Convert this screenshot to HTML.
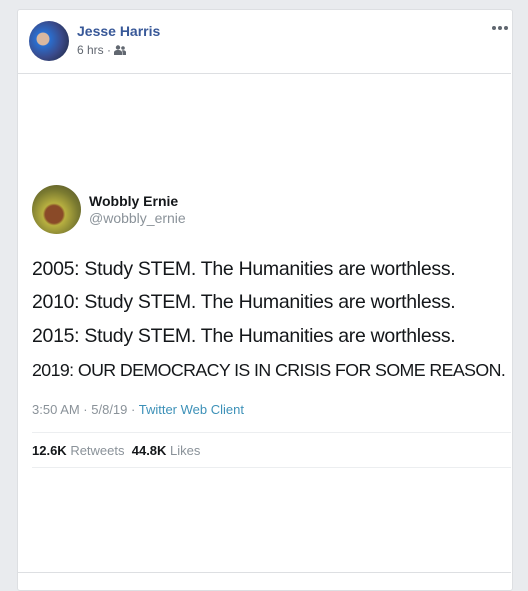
<html><head><style>
body{margin:0;width:528px;height:579px;background:#e9ebee;font-family:"Liberation Sans",sans-serif;position:relative;overflow:hidden}
.card{position:absolute;left:17px;top:9px;width:494px;height:580px;background:#fff;border:1px solid #dddfe2;border-radius:3px}
.abs{position:absolute;white-space:nowrap}
.t{font-size:19.5px;color:#14171a;letter-spacing:-0.3px;left:32px}
</style></head><body>
<div class="card"></div>
<div class="abs" style="left:29px;top:21px;width:40px;height:40px;border-radius:50%;background:radial-gradient(circle at 35% 45%,#d9b8a0 0 18%,#2a6fd0 20%,#3a4a8a 55%,#1a2233 100%)"></div>
<div class="abs" style="left:77px;top:23px;font-size:14px;font-weight:bold;color:#385898">Jesse Harris</div>
<div class="abs" style="left:77px;top:43px;font-size:12px;color:#616770">6 hrs · <svg width="12" height="10" viewBox="0 0 12 10" style="vertical-align:-1px"><circle cx="4" cy="2.5" r="2.2" fill="#616770"/><circle cx="9" cy="3" r="1.8" fill="#616770"/><path d="M0 10v-2.5c0-1.5 1.5-2.5 4-2.5s4 1 4 2.5V10z" fill="#616770"/><path d="M8.5 10V7.5c0-1 -0.3-1.5-0.8-2 0.4-.1.8-.2 1.3-.2 2 0 3 .9 3 2V10z" fill="#616770"/></svg></div>
<svg class="abs" style="left:491px;top:25px" width="18" height="6"><circle cx="3" cy="3" r="2" fill="#606770"/><circle cx="9" cy="3" r="2" fill="#606770"/><circle cx="15" cy="3" r="2" fill="#606770"/></svg>
<div class="abs" style="left:18px;top:73px;width:493px;height:1px;background:#dddfe2"></div>
<div class="abs" style="left:32px;top:185px;width:49px;height:49px;border-radius:50%;background:radial-gradient(circle at 45% 60%,#8a4a28 0 22%,#b8b040 28%,#7a7a30 60%,#4a4a28 100%)"></div>
<div class="abs" style="left:89px;top:193px;font-size:14px;font-weight:bold;color:#14171a">Wobbly Ernie</div>
<div class="abs" style="left:89px;top:210px;font-size:14px;color:#8a9299">@wobbly_ernie</div>
<div class="abs t" style="top:258px">2005: Study STEM. The Humanities are worthless.</div>
<div class="abs t" style="top:291px">2010: Study STEM. The Humanities are worthless.</div>
<div class="abs t" style="top:325px">2015: Study STEM. The Humanities are worthless.</div>
<div class="abs t" style="top:360px;font-size:17.8px;letter-spacing:-0.6px">2019: OUR DEMOCRACY IS IN CRISIS FOR SOME REASON.</div>
<div class="abs" style="left:32px;top:402px;font-size:13px;color:#8a9299">3:50 AM · 5/8/19 · <span style="color:#3d91b8">Twitter Web Client</span></div>
<div class="abs" style="left:32px;top:432px;width:479px;height:1px;background:#eceef0"></div>
<div class="abs" style="left:32px;top:443px;font-size:13px;color:#8a9299"><b style="color:#14171a">12.6K</b> Retweets &nbsp;<b style="color:#14171a">44.8K</b> Likes</div>
<div class="abs" style="left:32px;top:467px;width:479px;height:1px;background:#eceef0"></div>
<div class="abs" style="left:18px;top:572px;width:493px;height:1px;background:#dddfe2"></div>
</body></html>
